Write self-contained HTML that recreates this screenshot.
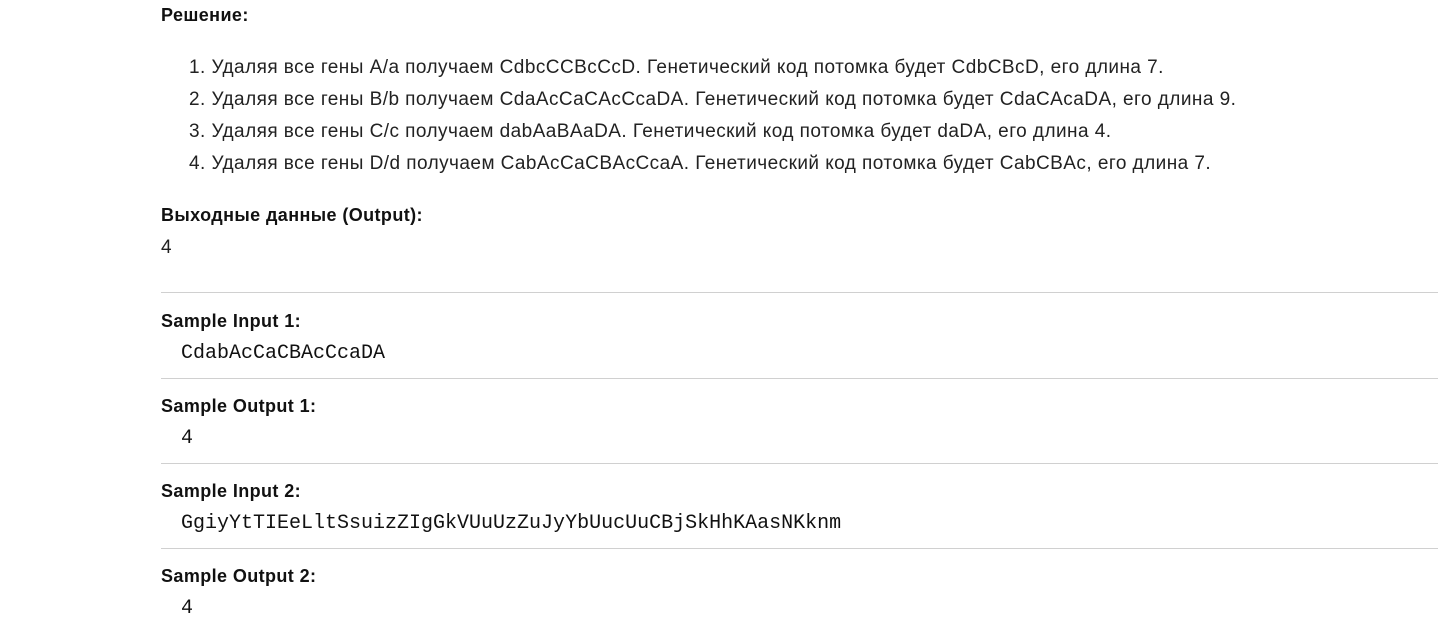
<!DOCTYPE html>
<html><head><meta charset="utf-8"><style>
body{margin:0;width:1448px;height:628px;background:#fff;position:relative;overflow:hidden;font-family:"Liberation Sans",sans-serif;color:#222;}
.a{position:absolute;white-space:nowrap;}
.h{font-weight:bold;font-size:18px;letter-spacing:0.4px;color:#111;}
.t{font-size:19px;letter-spacing:0.45px;}
.m{font-family:"Liberation Mono",monospace;font-size:20px;color:#111;}
.hr{position:absolute;left:161px;width:1277px;height:1px;background:#d0d0d0;}
</style></head><body>
<div class="a h" style="left:161px;top:5px">Решение:</div>
<div class="a t" style="left:189px;top:57px">1. Удаляя все гены A/a получаем CdbcCCBcCcD. Генетический код потомка будет CdbCBcD, его длина 7.</div>
<div class="a t" style="left:189px;top:89px">2. Удаляя все гены B/b получаем CdaAcCaCAcCcaDA. Генетический код потомка будет CdaCAcaDA, его длина 9.</div>
<div class="a t" style="left:189px;top:121px">3. Удаляя все гены C/c получаем dabAaBAaDA. Генетический код потомка будет daDA, его длина 4.</div>
<div class="a t" style="left:189px;top:153px">4. Удаляя все гены D/d получаем CabAcCaCBAcCcaA. Генетический код потомка будет CabCBAc, его длина 7.</div>
<div class="a h" style="left:161px;top:205px">Выходные данные (Output):</div>
<div class="a t" style="left:161px;top:237px">4</div>
<div class="hr" style="top:292px"></div>
<div class="a h" style="left:161px;top:311px">Sample Input 1:</div>
<div class="a m" style="left:181px;top:342px">CdabAcCaCBAcCcaDA</div>
<div class="hr" style="top:378px"></div>
<div class="a h" style="left:161px;top:396px">Sample Output 1:</div>
<div class="a m" style="left:181px;top:427px">4</div>
<div class="hr" style="top:463px"></div>
<div class="a h" style="left:161px;top:481px">Sample Input 2:</div>
<div class="a m" style="left:181px;top:512px">GgiyYtTIEeLltSsuizZIgGkVUuUzZuJyYbUucUuCBjSkHhKAasNKknm</div>
<div class="hr" style="top:548px"></div>
<div class="a h" style="left:161px;top:566px">Sample Output 2:</div>
<div class="a m" style="left:181px;top:597px">4</div>
</body></html>
